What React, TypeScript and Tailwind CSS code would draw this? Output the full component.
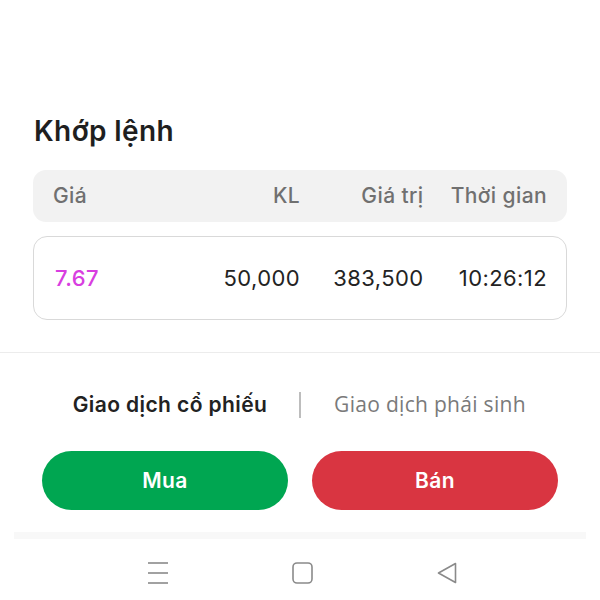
import React from "react";

export default function App() {
  const font = { fontFamily: "Inter, 'Noto Sans', sans-serif" };
  return (
    <div className="w-[600px] h-[600px] bg-white overflow-hidden flex flex-col" style={font}>
      <div className="px-[33px] pt-[115px]">
        <h1 className="text-[28px] leading-[32px] font-semibold tracking-[0.4px] text-[#1f1f1f] pl-[1px]">Khớp lệnh</h1>
        <div className="mt-[23px] h-[52px] rounded-[13px] bg-[#f2f2f2] px-[20px] grid grid-cols-4 items-center text-[21px] tracking-[0.4px] font-medium text-[#707070]">
          <div>Giá</div>
          <div className="text-right">KL</div>
          <div className="text-right">Giá trị</div>
          <div className="text-right">Thời gian</div>
        </div>
        <div className="mt-[14px] h-[84px] rounded-[14px] border border-[#d9d9d9] px-[19px] grid grid-cols-4 items-center text-[22px] tracking-[0.4px] text-[#232323]">
          <div className="text-[#d83ee0] font-medium pl-[2px]">7.67</div>
          <div className="text-right">50,000</div>
          <div className="text-right">383,500</div>
          <div className="text-right">10:26:12</div>
        </div>
      </div>
      <div className="mt-[32px] h-[1px] bg-[#ececec]" />
      <div className="mt-[39px] flex items-center justify-center h-[26px]">
        <div className="text-[21px] tracking-[0.4px] font-semibold text-[#222] w-[200px] text-center">Giao dịch cổ phiếu</div>
        <div className="w-[2px] h-[26px] bg-[#bdbdbd] mx-[29px]" />
        <div className="text-[21px] tracking-[0.3px] text-[#7a7a7a] w-[200px] text-center" style={{ fontFamily: "'Open Sans', 'Noto Sans', sans-serif" }}>Giao dịch phái sinh</div>
      </div>
      <div className="mt-[33px] px-[42px] flex gap-[24px]">
        <button className="flex-1 h-[59px] rounded-full bg-[#00a651] text-white text-[21px] tracking-[0.4px] font-semibold">Mua</button>
        <button className="flex-1 h-[59px] rounded-full bg-[#d93541] text-white text-[21px] tracking-[0.4px] font-semibold">Bán</button>
      </div>
      <div className="mt-[22px] mx-[14px] h-[7px] bg-[#f8f8f8]" />
      <div className="mt-[23px] flex items-center justify-center gap-[124px] pl-[4px]">
        <svg width="20" height="22" viewBox="0 0 20 22" fill="none" stroke="#8a8a8a" strokeWidth="1.6">
          <line x1="0" y1="1" x2="20" y2="1" />
          <line x1="0" y1="11" x2="20" y2="11" />
          <line x1="0" y1="21" x2="20" y2="21" />
        </svg>
        <svg width="21" height="22" viewBox="0 0 21 22" fill="none" stroke="#8a8a8a" strokeWidth="1.6">
          <rect x="1" y="1" width="19" height="20" rx="4" />
        </svg>
        <svg width="20" height="22" viewBox="0 0 20 22" fill="none" stroke="#8a8a8a" strokeWidth="1.6" strokeLinejoin="round">
          <path d="M18.5 1.5 L1.5 11 L18.5 20.5 Z" />
        </svg>
      </div>
    </div>
  );
}
